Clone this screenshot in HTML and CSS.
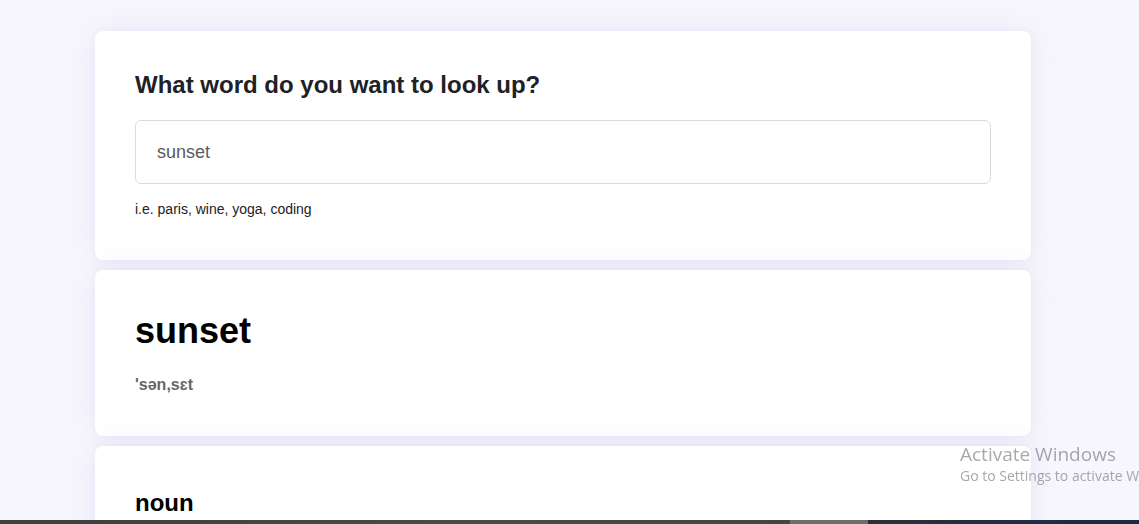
FILE: index.html
```html
<!DOCTYPE html>
<html lang="en">
<head>
<meta charset="utf-8">
<title>Dictionary</title>
<link rel="stylesheet" href="styles.css">
</head>
<body>
<main class="container">
  <section class="card search-card">
    <h1 class="search-title">What word do you want to look up?</h1>
    <input class="search-input" type="search" value="sunset" aria-label="Search word">
    <p class="hint">i.e. paris, wine, yoga, coding</p>
  </section>
  <section class="card word-card">
    <h2 class="word">sunset</h2>
    <p class="phonetic">'sən,sɛt</p>
  </section>
  <section class="card meaning-card">
    <h3 class="pos">noun</h3>
  </section>
</main>
<div class="watermark">
  <div class="wm-title">Activate Windows</div>
  <div class="wm-sub">Go to Settings to activate Windows.</div>
</div>
<div class="taskbar">
  <span class="tb-left"></span><span class="tb-mid"></span><span class="tb-right"></span>
</div>
</body>
</html>
```
FILE: styles.css
```css
html, body {
  margin: 0;
  padding: 0;
  height: 100%;
  overflow: hidden;
}
body {
  background: #f7f6fc;
  font-family: "Liberation Sans", Arial, sans-serif;
  color: #1f2328;
}
.container {
  width: 936px;
  margin: 31px 0 0 95px;
  display: flex;
  flex-direction: column;
  gap: 10px;
}
.card {
  background: #ffffff;
  border-radius: 8px;
  box-shadow: 0 0 30px rgba(110, 95, 210, 0.09), 0 0 6px rgba(110, 95, 210, 0.06);
  padding: 40px;
}
.search-card {
  height: 229px;
  box-sizing: border-box;
  padding-top: 40px;
}
.search-title {
  margin: 0;
  font-size: 24px;
  font-weight: 700;
  line-height: 28px;
  color: #1e2125;
}
.search-input {
  display: block;
  box-sizing: border-box;
  width: 856px;
  height: 64px;
  margin-top: 21px;
  padding: 0 21px;
  border: 1px solid #dcdcdc;
  border-radius: 6px;
  font-family: "Liberation Sans", Arial, sans-serif;
  font-size: 18px;
  color: #5a5a5a;
  background: #fff;
  outline: none;
}
.hint {
  margin: 17px 0 0;
  font-size: 14px;
  line-height: 16px;
  color: #222;
}
.word-card {
  height: 166px;
  box-sizing: border-box;
  padding-top: 40px;
}
.word {
  margin: 0;
  font-size: 36px;
  font-weight: 700;
  line-height: 42px;
  color: #000;
}
.phonetic {
  margin: 24px 0 0;
  font-size: 16px;
  font-weight: 700;
  line-height: 18px;
  color: #666;
}
.meaning-card {
  height: 200px;
  box-sizing: border-box;
  padding-top: 43px;
}
.pos {
  margin: 0;
  font-size: 24px;
  font-weight: 700;
  line-height: 28px;
  color: #000;
}
.watermark {
  position: fixed;
  left: 960px;
  right: 0;
  top: 443px;
  overflow: hidden;
  white-space: nowrap;
  font-family: "Open Sans", "Noto Sans", sans-serif;
  color: rgba(120, 120, 130, 0.65);
}
.wm-title {
  font-size: 19px;
  line-height: 22px;
}
.wm-sub {
  font-size: 14px;
  line-height: 18px;
  margin-top: 2px;
}
.taskbar {
  position: fixed;
  left: 0;
  right: 0;
  bottom: 0;
  height: 4px;
  display: flex;
}
.tb-left {
  width: 790px;
  background: linear-gradient(90deg, #3e3e3e, #4a4a4a 60%, #444);
}
.tb-mid {
  width: 78px;
  background: #6d6d6d;
}
.tb-right {
  flex: 1;
  background: linear-gradient(90deg, #2b2f38, #1c2a44);
}
```
